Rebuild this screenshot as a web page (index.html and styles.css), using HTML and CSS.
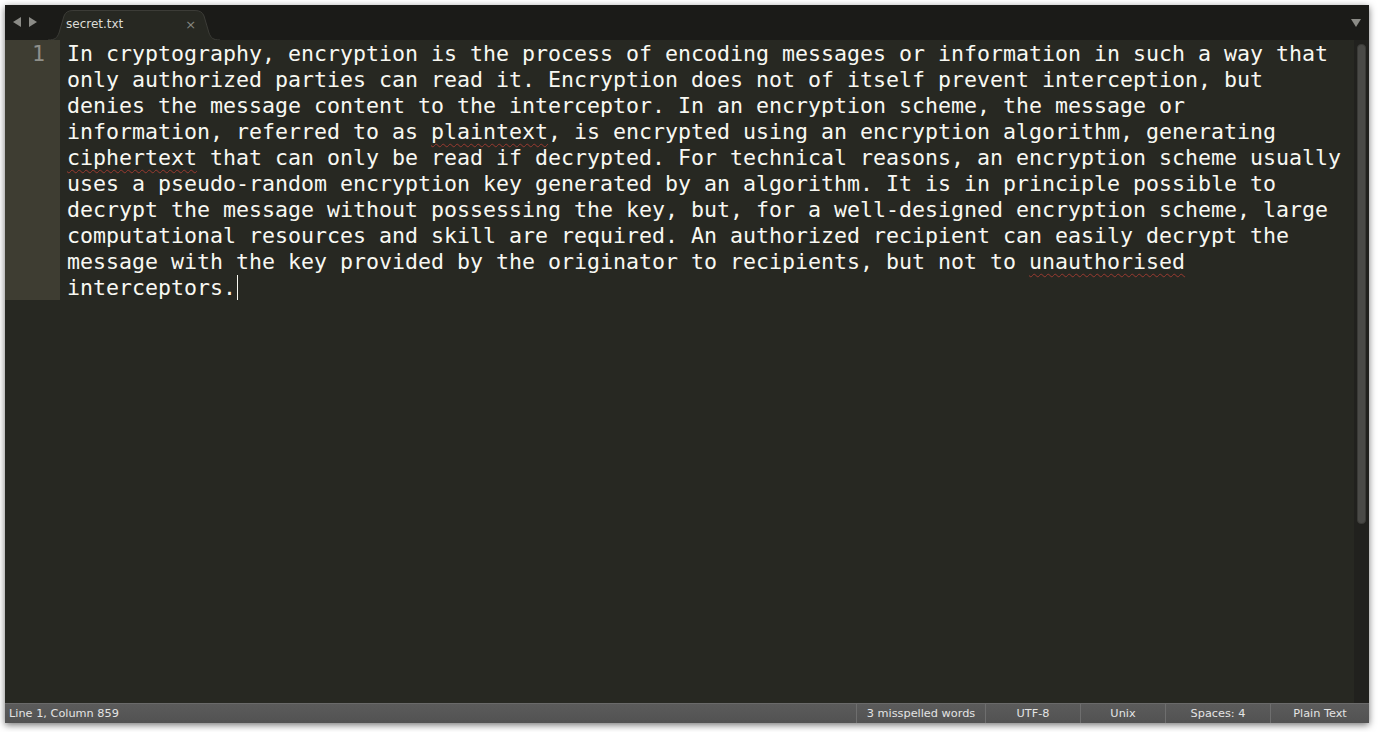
FILE: index.html
```html
<!DOCTYPE html>
<html>
<head>
<meta charset="utf-8">
<link rel="stylesheet" href="styles.css">
</head>
<body>
<div class="window">
  <div class="tabbar">
    <div class="nav">
      <svg width="30" height="12" viewBox="0 0 30 12"><path d="M9 1 L9 11 L1 6 Z" fill="#8b8b86"/><path d="M17 1 L17 11 L25 6 Z" fill="#8b8b86"/></svg>
    </div>
    <div class="tab">
      <svg class="tab-shape" width="172" height="30" viewBox="0 0 172 30"><path d="M0 30 C7 30 9 28 11 23 L16 6 Q18 0.5 25 0.5 L147 0.5 Q154 0.5 156 6 L161 23 C163 28 165 30 172 30" fill="#272822" stroke="#3c3c37" stroke-width="1"/></svg>
      <span class="tab-title">secret.txt</span>
      <span class="tab-close">×</span>
    </div>
    <div class="spacer"></div>
    <div class="dropdown">
      <svg width="12" height="10" viewBox="0 0 12 10"><path d="M1 1 L11 1 L6 9 Z" fill="#8b8b86"/></svg>
    </div>
  </div>
  <div class="editor">
    <div class="gutter"><div class="current">1</div></div>
    <div class="text">
      <div class="line">In cryptography, encryption is the process of encoding messages or information in such a way that</div>
      <div class="line">only authorized parties can read it. Encryption does not of itself prevent interception, but</div>
      <div class="line">denies the message content to the interceptor. In an encryption scheme, the message or</div>
      <div class="line">information, referred to as <span class="misspelled">plaintext</span>, is encrypted using an encryption algorithm, generating</div>
      <div class="line"><span class="misspelled">ciphertext</span> that can only be read if decrypted. For technical reasons, an encryption scheme usually</div>
      <div class="line">uses a pseudo-random encryption key generated by an algorithm. It is in principle possible to</div>
      <div class="line">decrypt the message without possessing the key, but, for a well-designed encryption scheme, large</div>
      <div class="line">computational resources and skill are required. An authorized recipient can easily decrypt the</div>
      <div class="line">message with the key provided by the originator to recipients, but not to <span class="misspelled">unauthorised</span></div>
      <div class="line">interceptors.<span class="cursor"></span></div>
    </div>
    <div class="scrollbar"><div class="thumb"></div></div>
  </div>
  <div class="statusbar">
    <div class="status-left">Line 1, Column 859</div>
    <div class="cell c1">3 misspelled words</div>
    <div class="cell c2">UTF-8</div>
    <div class="cell c3">Unix</div>
    <div class="cell c4">Spaces: 4</div>
    <div class="cell c5">Plain Text</div>
  </div>
</div>
</body>
</html>
```

FILE: styles.css
```css
html, body {
  margin: 0;
  padding: 0;
  background: #ffffff;
}
body {
  padding: 5px 9px 9px 5px;
  font-family: "DejaVu Sans", sans-serif;
}
.window {
  width: 1364px;
  height: 718px;
  display: flex;
  flex-direction: column;
  background: #272822;
  box-shadow: 0 2px 7px rgba(0, 0, 0, 0.55);
}
.tabbar {
  height: 35px;
  flex: none;
  background: #1b1b18;
  display: flex;
  align-items: flex-end;
}
.nav {
  width: 43px;
  height: 35px;
  display: flex;
  align-items: center;
  padding-left: 7px;
  box-sizing: border-box;
  padding-bottom: 1px;
}
.nav svg {
  display: block;
}
.tab {
  position: relative;
  width: 172px;
  height: 30px;
  display: flex;
  align-items: center;
}
.tab-shape {
  position: absolute;
  left: 0;
  top: 0;
}
.tab-title {
  position: relative;
  margin-left: 18px;
  font-size: 12px;
  color: #dcdcd6;
  padding-bottom: 2px;
}
.tab-close {
  position: relative;
  margin-left: 62px;
  font-size: 13px;
  color: #85857f;
  padding-bottom: 2px;
}
.spacer {
  flex: 1;
}
.dropdown {
  height: 35px;
  width: 19px;
  display: flex;
  align-items: center;
}
.editor {
  flex: 1;
  display: flex;
  min-height: 0;
  background: #272822;
}
.gutter {
  width: 55px;
  flex: none;
}
.gutter .current {
  height: 260px;
  background: #3e3d32;
  font-family: "DejaVu Sans Mono", monospace;
  font-size: 21.6px;
  line-height: 26px;
  color: #8f908a;
  text-align: right;
  padding-right: 15px;
  padding-top: 1px;
  box-sizing: border-box;
}
.text {
  flex: 1;
  padding-left: 7px;
  padding-top: 1px;
  font-family: "DejaVu Sans Mono", monospace;
  font-size: 21.6px;
  line-height: 26px;
  color: #f8f8f2;
}
.line {
  height: 26px;
  white-space: pre;
}
.misspelled {
  text-decoration: underline wavy #9a3a30;
  text-decoration-thickness: 1px;
  text-underline-offset: 4px;
}
.cursor {
  display: inline-block;
  width: 1px;
  height: 25px;
  background: #f8f8f0;
  vertical-align: top;
  margin-left: 1px;
}
.scrollbar {
  width: 15px;
  flex: none;
  background: #21211e;
  padding: 4px 3px 0 3px;
  box-sizing: border-box;
}
.thumb {
  width: 9px;
  height: 480px;
  border-radius: 4px;
  background: #4a4a47;
  border: 1px solid #3a3a37;
  box-sizing: border-box;
}
.statusbar {
  height: 20px;
  flex: none;
  background: linear-gradient(#5b5b5b, #525252);
  border-top: 1px solid #6a6a6a;
  box-sizing: border-box;
  display: flex;
  align-items: center;
  font-size: 11.3px;
  color: #e4e4e4;
}
.status-left {
  flex: 1;
  padding-left: 4px;
}
.cell {
  height: 100%;
  display: flex;
  align-items: center;
  justify-content: center;
  border-left: 1px solid #6e6e6e;
  box-sizing: border-box;
}
.c1 { width: 129px; }
.c2 { width: 95px; }
.c3 { width: 85px; }
.c4 { width: 105px; }
.c5 { width: 99px; }
```
